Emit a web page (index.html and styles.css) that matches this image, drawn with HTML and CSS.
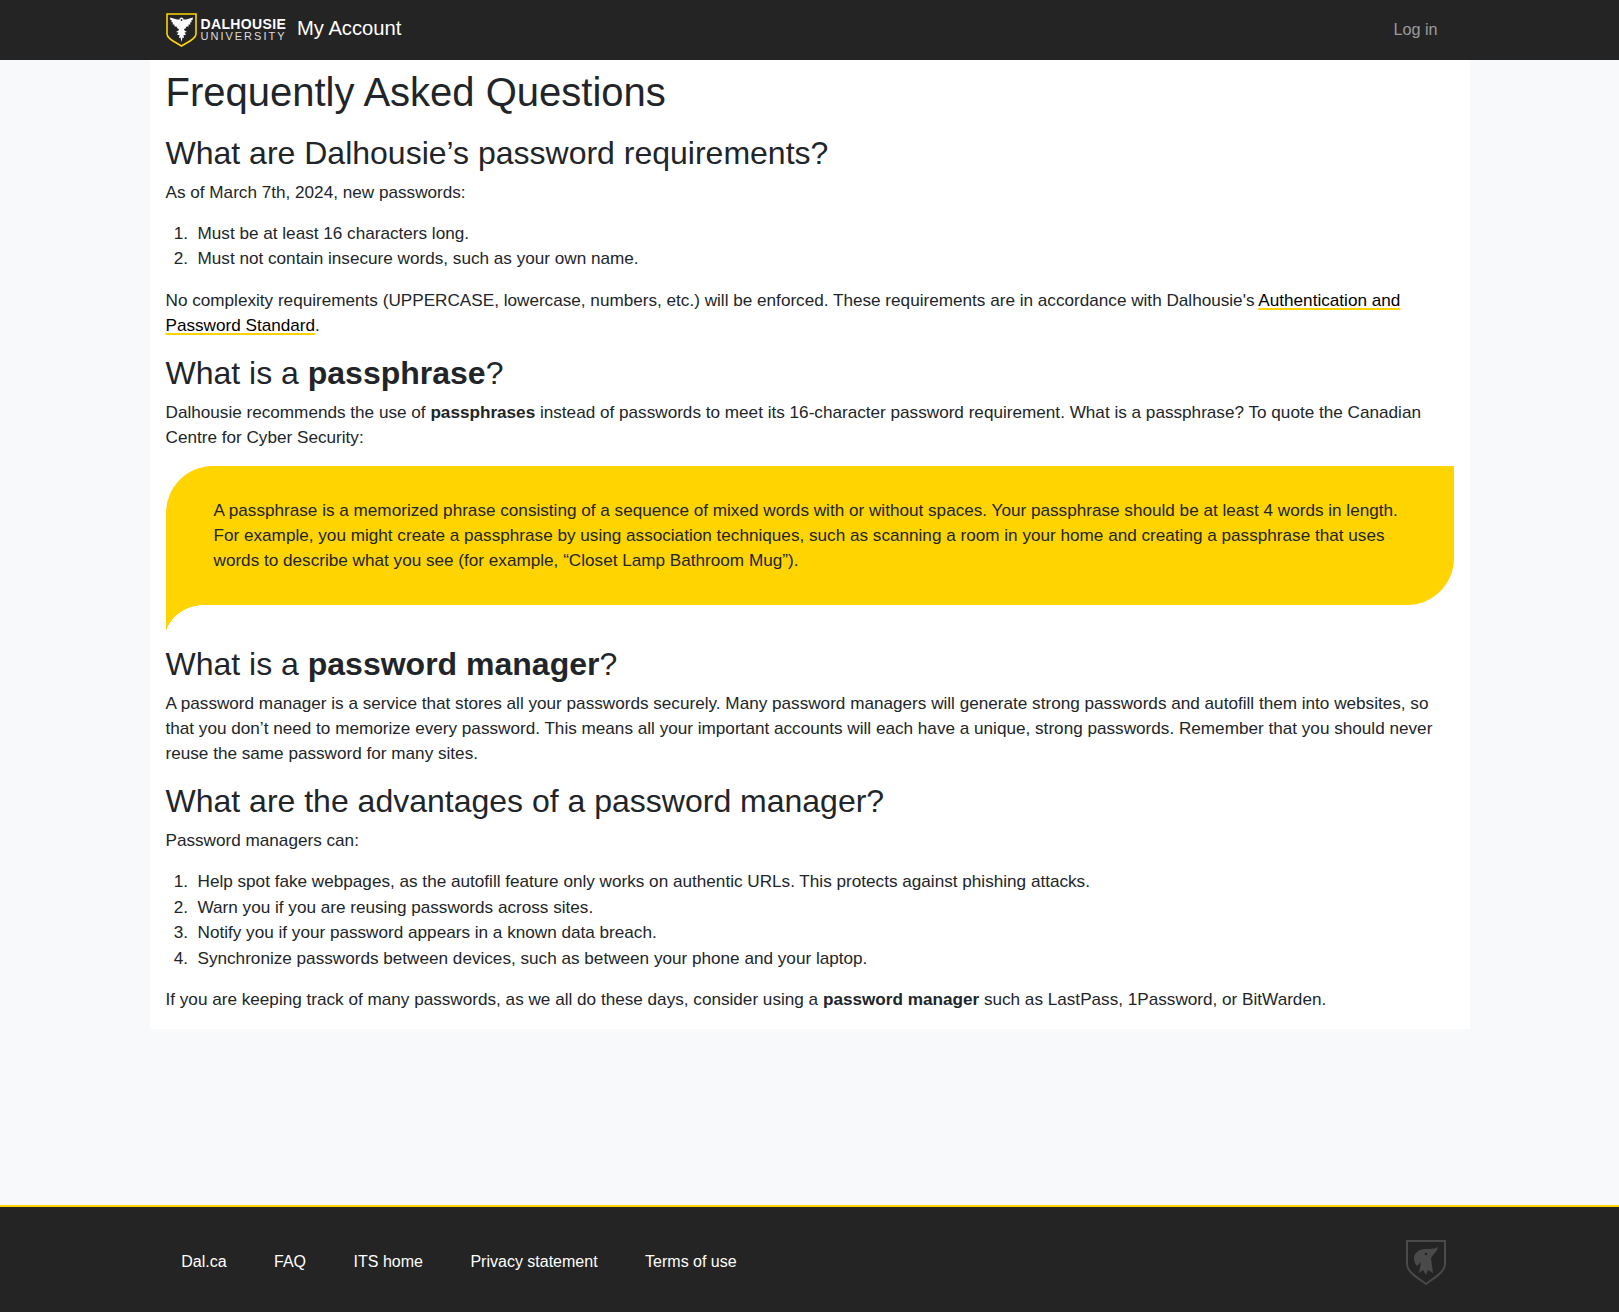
FILE: index.html
```html
<!DOCTYPE html>
<html lang="en">
<head>
<meta charset="utf-8">
<title>Frequently Asked Questions</title>
<link rel="stylesheet" href="styles.css">
</head>
<body>
<header class="topbar">
  <div class="topbar-inner">
    <a class="brand" href="#">
      <svg class="logo" viewBox="0 0 31 34" width="31" height="34">
        <path d="M1 1H30V21C30 26 21 29.500 15.500 33C10 29.500 1 26 1 21Z" fill="#242424" stroke="#ffd400" stroke-width="1.600"/>
        <path d="M15.500 4.500C16.800 4.500 17.500 5.500 17.500 6.500L20 6.500L27 4.500L26.500 7L25 7.500L25.800 9L24 9.500L24.500 11.500L22.500 11.500L22.500 13.500L20.500 13.500L19.500 15.500L18 16L18.500 17.500L21 19L18.500 19.500L20 22L17.500 22L18 25L16.500 24.500L15.500 29L14.500 24.500L13 25L13.500 22L11 22L12.500 19.500L10 19L12.500 17.500L13 16L11.500 15.500L10.500 13.500L8.500 13.500L8.500 11.500L6.500 11.500L7 9.500L5.200 9L6 7.500L4.500 7L4 4.500L11 6.500L13.500 6.500C13.500 5.500 14.200 4.500 15.500 4.500Z" fill="#fff"/>
        <circle cx="15.500" cy="7" r="0.900" fill="#242424"/>
      </svg>
      <span class="wordmark"><span class="wm-top">DALHOUSIE</span><span class="wm-bottom">UNIVERSITY</span></span>
      <span class="brand-title">My Account</span>
    </a>
    <a class="login" href="#">Log in</a>
  </div>
</header>
<main class="content">
  <h1>Frequently Asked Questions</h1>
  <h2>What are Dalhousie’s password requirements?</h2>
  <p>As of March 7th, 2024, new passwords:</p>
  <ol>
    <li>Must be at least 16 characters long.</li>
    <li>Must not contain insecure words, such as your own name.</li>
  </ol>
  <p>No complexity requirements (UPPERCASE, lowercase, numbers, etc.) will be enforced. These requirements are in accordance with Dalhousie's <a class="link" href="#">Authentication and Password Standard</a>.</p>
  <h2>What is a <strong>passphrase</strong>?</h2>
  <p>Dalhousie recommends the use of <strong>passphrases</strong> instead of passwords to meet its 16-character password requirement. What is a passphrase? To quote the Canadian Centre for Cyber Security:</p>
  <blockquote class="bubble">A passphrase is a memorized phrase consisting of a sequence of mixed words with or without spaces. Your passphrase should be at least 4 words in length. For example, you might create a passphrase by using association techniques, such as scanning a room in your home and creating a passphrase that uses words to describe what you see (for example, “Closet Lamp Bathroom Mug”).</blockquote>
  <h2>What is a <strong>password manager</strong>?</h2>
  <p>A password manager is a service that stores all your passwords securely. Many password managers will generate strong passwords and autofill them into websites, so that you don’t need to memorize every password. This means all your important accounts will each have a unique, strong passwords. Remember that you should never reuse the same password for many sites.</p>
  <h2>What are the advantages of a password manager?</h2>
  <p>Password managers can:</p>
  <ol>
    <li>Help spot fake webpages, as the autofill feature only works on authentic URLs. This protects against phishing attacks.</li>
    <li>Warn you if you are reusing passwords across sites.</li>
    <li>Notify you if your password appears in a known data breach.</li>
    <li>Synchronize passwords between devices, such as between your phone and your laptop.</li>
  </ol>
  <p class="last">If you are keeping track of many passwords, as we all do these days, consider using a <strong>password manager</strong> such as LastPass, 1Password, or BitWarden.</p>
</main>
<footer class="footer">
  <div class="footer-inner">
    <nav class="footer-nav">
      <a href="#">Dal.ca</a>
      <a href="#">FAQ</a>
      <a href="#">ITS home</a>
      <a href="#">Privacy statement</a>
      <a href="#">Terms of use</a>
    </nav>
    <svg class="footer-logo" viewBox="0 0 40 45" width="40" height="45">
      <path d="M1 1H39V24C39 32 28 38 20 44C12 38 1 32 1 24Z" fill="none" stroke="#4a4a4a" stroke-width="2"/>
      <path d="M8 18C8 13 13 9 19 9C24 9 29 9 32 7C31 11 29 13 27 15L25 18L27 33L22 30L20 35L17 30L13 33L15 22L11 26C9 24 8 21 8 18Z" fill="#4a4a4a"/>
      <circle cx="20" cy="14" r="1.300" fill="#242424"/>
    </svg>
  </div>
</footer>
</body>
</html>
```

FILE: styles.css
```css
* { box-sizing: border-box; }
html, body { margin: 0; }
body {
  min-height: 1312px;
  display: flex;
  flex-direction: column;
  background: #f8f9fa;
  color: #212529;
  font-family: "Liberation Sans", Arial, sans-serif;
  font-size: 17.150px;
  line-height: 25.200px;
}
.topbar { background: #242424; height: 60px; }
.topbar-inner {
  width: 1320px;
  height: 100%;
  margin: 0 auto;
  padding: 0 16px 0 16px;
  display: flex;
  align-items: center;
  justify-content: space-between;
}
.brand { display: flex; align-items: center; color: #fff; text-decoration: none; }
.logo { display: block; margin-right: 4px; }
.wordmark { display: flex; flex-direction: column; color: #fff; margin-right: 11.500px; width: 85px; padding-bottom: 2px; }
.wm-top { font-size: 14px; line-height: 14px; font-weight: 700; letter-spacing: 0.350px; white-space: nowrap; }
.wm-bottom { font-size: 11px; line-height: 10px; letter-spacing: 2px; color: #ddd; white-space: nowrap; }
.brand-title { font-size: 20.200px; line-height: 24px; padding-bottom: 4px; }
.login { color: rgba(255,255,255,.55); font-size: 16.200px; line-height: 24px; padding-right: 16px; padding-bottom: 2px; text-decoration: none; }
.content {
  width: 1320px;
  margin: 0 auto;
  padding: 0 16px;
  background: #fff;
}
h1 { font-size: 40px; line-height: 48px; font-weight: 400; margin: 8px 0 18px; }
h2 { font-size: 32px; line-height: 38.400px; font-weight: 400; margin: 0 0 7.600px; }
p { margin: 0 0 15.700px; }
ol { margin: 0 0 16px; padding-left: 32px; }
li { line-height: 25.500px; }
li::marker { content: counter(list-item) ".  "; }
.last { margin-bottom: 17px; }
.link {
  color: #000;
  text-decoration: underline 2px #ffd400;
  text-underline-offset: 2px;
  text-decoration-skip-ink: none;
}
.bubble {
  position: relative;
  margin: 0 0 40px;
  padding: 32px 48px;
  height: 139px;
  background: #ffd400;
  border-radius: 47px 0 47px 0;
}
.bubble::after {
  content: "";
  position: absolute;
  left: 0;
  top: 100%;
  width: 37px;
  height: 25px;
  background: radial-gradient(circle 40px at 37px 40px, transparent 99%, #ffd400 100%);
}
.footer {
  margin-top: auto;
  height: 107px;
  background: #242424;
  border-top: 2px solid #ffd400;
}
.footer-inner {
  width: 1320px;
  height: 100%;
  margin: 0 auto;
  padding: 5px 24px 0 31.700px;
  display: flex;
  align-items: center;
  justify-content: space-between;
}
.footer-nav { display: flex; gap: 47.500px; font-size: 16px; line-height: 24px; }
.footer-nav a { color: #fff; text-decoration: none; }
.footer-logo { display: block; }
```
